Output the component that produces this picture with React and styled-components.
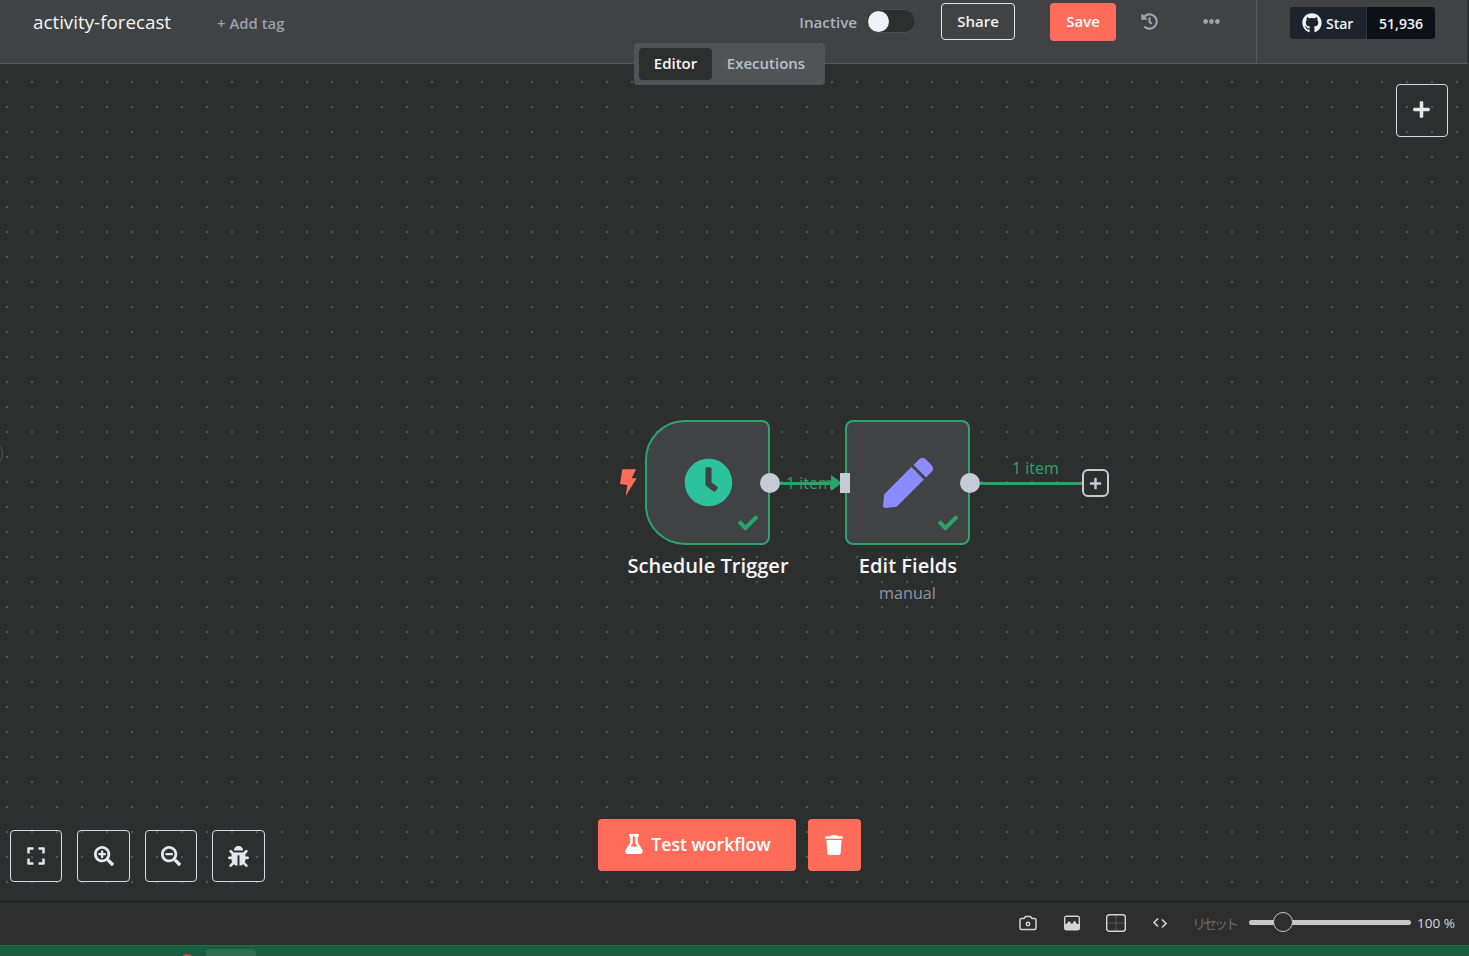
import styled, { createGlobalStyle } from "styled-components";
import {
  FaBug,
  FaCheck,
  FaClock,
  FaEllipsisH,
  FaExpand,
  FaFlask,
  FaGithub,
  FaHistory,
  FaPen,
  FaPlus,
  FaSearchMinus,
  FaSearchPlus,
  FaTrash,
} from "react-icons/fa";

const GlobalStyle = createGlobalStyle`
  html, body {
    margin: 0;
    height: 100%;
    overflow: hidden;
    background: #2d2e2e;
    font-family: "Open Sans", "Liberation Sans", sans-serif;
  }
  * { box-sizing: border-box; }
`;

const App = () => {
  return (
    <Page>
      <GlobalStyle />
      <Header>
        <Title>activity-forecast</Title>
        <AddTag>+ Add tag</AddTag>
        <Actions>
          <StatusLabel>Inactive</StatusLabel>
          <Toggle>
            <Knob />
          </Toggle>
          <ShareButton>Share</ShareButton>
          <SaveButton>Save</SaveButton>
          <HeaderIcon $left={25}>
            <FaHistory size={17} />
          </HeaderIcon>
          <HeaderIcon $left={45}>
            <FaEllipsisH size={17} />
          </HeaderIcon>
        </Actions>
        <GithubArea>
          <GithubBadge>
            <StarPart>
              <FaGithub size={20} />
              Star
            </StarPart>
            <CountPart>51,936</CountPart>
          </GithubBadge>
        </GithubArea>
        <Tabs>
          <Tab $active>Editor</Tab>
          <Tab>Executions</Tab>
        </Tabs>
      </Header>

      <Canvas>
        <EdgeMark />
        <AddNodeButton>
          <FaPlus size={19} />
        </AddNodeButton>

        <TriggerBolt>
          <svg width="19" height="29" viewBox="0 0 19 29" fill="currentColor">
            <path d="M3.3 1.3H17l-4.3 9h5L6.7 28l1.6-11L1 16z" />
          </svg>
        </TriggerBolt>

        <NodeBox $x={645} $trigger>
          <ClockIcon>
            <FaClock size={49} />
          </ClockIcon>
          <NodeCheck>
            <FaCheck size={20} />
          </NodeCheck>
          <OutputDot />
        </NodeBox>
        <NodeTitle $x={708}>Schedule Trigger</NodeTitle>

        <Wire $x={780} $width={56} />
        <ArrowHead />
        <WireLabel $x={786} $y={472}>
          1 item
        </WireLabel>
        <InputPort />

        <NodeBox $x={845}>
          <PenIcon>
            <FaPen size={50} />
          </PenIcon>
          <NodeCheck>
            <FaCheck size={20} />
          </NodeCheck>
          <OutputDot />
        </NodeBox>
        <NodeTitle $x={908}>Edit Fields</NodeTitle>
        <NodeSubtitle>manual</NodeSubtitle>

        <Wire $x={980} $width={102} />
        <WireLabel $x={1012} $y={457}>
          1 item
        </WireLabel>
        <PlusEndpoint>
          <FaPlus size={13} />
        </PlusEndpoint>

        <ZoomTools>
          <ToolButton $width={52}>
            <FaExpand size={20} />
          </ToolButton>
          <ToolButton $width={53}>
            <FaSearchPlus size={20} />
          </ToolButton>
          <ToolButton $width={52}>
            <FaSearchMinus size={20} />
          </ToolButton>
          <ToolButton $width={53}>
            <FaBug size={21} />
          </ToolButton>
        </ZoomTools>

        <RunTools>
          <RunButton>
            <FaFlask size={20} />
            Test workflow
          </RunButton>
          <TrashButton>
            <FaTrash size={20} />
          </TrashButton>
        </RunTools>
      </Canvas>

      <BottomBar>
        <BarIcon>
          <svg width="20" height="20" viewBox="0 0 20 20" fill="none" stroke="currentColor" strokeWidth="1.5">
            <path d="M3.5 5.5h2.5l1.5-2h5l1.5 2h2.5a1.5 1.5 0 0 1 1.5 1.5v8a1.5 1.5 0 0 1-1.5 1.5h-13a1.5 1.5 0 0 1-1.5-1.5v-8a1.5 1.5 0 0 1 1.5-1.5z" />
            <circle cx="10" cy="11" r="1.7" />
          </svg>
        </BarIcon>
        <BarIcon>
          <svg width="20" height="20" viewBox="0 0 20 20">
            <rect x="2" y="2.5" width="16" height="15" rx="2.5" fill="currentColor" />
            <rect x="3.4" y="4" width="13.2" height="7" fill="#2e2e2e" />
            <path d="M3.4 12l3.6-4 3 3 2.5-3.4 3.6 5v3h-12.7z" fill="currentColor" />
          </svg>
        </BarIcon>
        <BarIcon>
          <svg width="22" height="20" viewBox="0 0 22 20" fill="none">
            <path d="M11 2v16M2 10h18" stroke="#555" strokeWidth="1" />
            <rect x="1.7" y="1.7" width="18.6" height="16.6" rx="2.5" stroke="currentColor" strokeWidth="1.4" />
          </svg>
        </BarIcon>
        <BarIcon>
          <svg width="16" height="14" viewBox="0 0 16 14" fill="none" stroke="currentColor" strokeWidth="1.6">
            <path d="M6 2.5L2 6.5l4 4M10 3.5l4 4-4 4" />
          </svg>
        </BarIcon>
        <ResetLabel>リセット</ResetLabel>
        <Slider>
          <SliderThumb />
        </Slider>
        <ZoomValue>100 %</ZoomValue>
      </BottomBar>

      <TaskStrip>
        <RedDot />
        <TaskTab />
      </TaskStrip>
    </Page>
  );
};

export default App;

const Page = styled.div`
  position: relative;
  display: flex;
  flex-direction: column;
  height: 956px;
  overflow: hidden;
`;

const Header = styled.header`
  position: relative;
  z-index: 2;
  display: flex;
  align-items: flex-start;
  height: 64px;
  flex-shrink: 0;
  padding-left: 33px;
  background: #414244;
  border-bottom: 1px solid #57585a;
  border-right: 2px solid #2f3031;
`;

const Title = styled.div`
  margin-top: 10px;
  width: 184px;
  font-size: 18.8px;
  line-height: 24px;
  color: #f5f6f8;
`;

const AddTag = styled.div`
  margin-top: 14px;
  font-size: 14.9px;
  font-weight: 600;
  line-height: 19px;
  color: #99a0ab;
`;

const Actions = styled.div`
  display: flex;
  align-items: flex-start;
  margin-left: auto;
  padding-top: 3px;
`;

const StatusLabel = styled.div`
  margin-top: 10px;
  margin-right: 9px;
  font-size: 15.2px;
  font-weight: 600;
  line-height: 19px;
  color: #a9b1bd;
`;

const Toggle = styled.div`
  display: flex;
  align-items: center;
  width: 50px;
  height: 24px;
  margin-top: 6px;
  margin-right: 25px;
  padding-left: 1px;
  border-radius: 12px;
  border: 1px solid #4c4d4f;
  background: #2d2e2e;
`;

const Knob = styled.div`
  width: 21px;
  height: 21px;
  border-radius: 50%;
  background: #f0f1f8;
`;

const ShareButton = styled.button`
  width: 74px;
  height: 37px;
  padding: 0 0 1px;
  margin-right: 35px;
  border: 1px solid #e2e4ea;
  border-radius: 4px;
  background: transparent;
  color: #f0f1f5;
  font-family: inherit;
  font-size: 15px;
  font-weight: 600;
`;

const SaveButton = styled.button`
  width: 66px;
  height: 38px;
  padding: 0 0 3px;
  border: none;
  border-radius: 4px;
  background: #ff6d5a;
  color: #fff;
  font-family: inherit;
  font-size: 15px;
  font-weight: 600;
`;

const HeaderIcon = styled.div`
  display: flex;
  align-items: center;
  justify-content: center;
  width: 17px;
  height: 37px;
  margin-left: ${({ $left }) => $left}px;
  color: #9ea3ab;
`;

const GithubArea = styled.div`
  display: flex;
  align-items: flex-start;
  width: 211px;
  height: 63px;
  margin-left: 36px;
  padding: 7px 0 0 33px;
  border-left: 1px solid #57585a;
`;

const GithubBadge = styled.div`
  display: flex;
  height: 32px;
  border-radius: 3px;
  overflow: hidden;
  font-size: 14px;
  font-weight: 600;
  color: #f0f3f6;
`;

const StarPart = styled.div`
  display: flex;
  align-items: center;
  gap: 4px;
  width: 77px;
  padding-left: 12px;
  background: #1d232b;
  border-right: 1px solid #30363d;
`;

const CountPart = styled.div`
  display: flex;
  align-items: center;
  justify-content: center;
  width: 68px;
  background: #0d1117;
`;

const Tabs = styled.div`
  position: absolute;
  top: 43px;
  left: 634px;
  display: flex;
  gap: 0;
  width: 191px;
  height: 42px;
  padding: 5px;
  border-radius: 4px;
  background: #525355;
`;

const Tab = styled.div`
  display: flex;
  align-items: center;
  justify-content: center;
  width: ${({ $active }) => ($active ? "73px" : "108px")};
  padding-bottom: 2px;
  border-radius: 4px;
  background: ${({ $active }) => ($active ? "#2d2e2e" : "transparent")};
  color: ${({ $active }) => ($active ? "#f5f6f8" : "#b9c0cc")};
  font-size: 15px;
  font-weight: 600;
`;

const Canvas = styled.main`
  position: relative;
  flex: 1;
  background-color: #2d2e2e;
  background-image: radial-gradient(circle at 1px 1px, #545556 1px, transparent 1.2px);
  background-size: 25px 25px;
  background-position: 6px -8px;
`;

const EdgeMark = styled.div`
  position: absolute;
  left: -9px;
  top: 381px;
  width: 12px;
  height: 18px;
  border-radius: 50%;
  border: 1px solid #55565a;
`;

const OutlineButton = styled.button`
  display: flex;
  align-items: center;
  justify-content: center;
  padding: 0;
  border: 1px solid #d6d8de;
  border-radius: 4px;
  background: transparent;
  color: #e6e8ee;
`;

const AddNodeButton = styled(OutlineButton)`
  position: absolute;
  top: 20px;
  left: 1396px;
  width: 52px;
  height: 53px;
  padding: 0 1px 2px 0;
`;

const TriggerBolt = styled.div`
  position: absolute;
  left: 619px;
  top: 404px;
  display: flex;
  color: #ff6d5a;
`;

const NodeBox = styled.div`
  position: absolute;
  left: ${({ $x }) => $x}px;
  top: 356px;
  width: 125px;
  height: 125px;
  display: flex;
  align-items: center;
  justify-content: center;
  background: #414244;
  border: 2px solid #29a568;
  border-radius: ${({ $trigger }) => ($trigger ? "40px 8px 8px 40px" : "8px")};
`;

const ClockIcon = styled.div`
  display: flex;
  margin-left: 1px;
  color: #2dc29d;
`;

const PenIcon = styled.div`
  display: flex;
  color: #8b8bff;
`;

const NodeCheck = styled.div`
  position: absolute;
  right: 10px;
  bottom: 10px;
  display: flex;
  color: #29a568;
`;

const OutputDot = styled.div`
  position: absolute;
  right: -12px;
  top: 50%;
  width: 20px;
  height: 20px;
  margin-top: -10px;
  border-radius: 50%;
  background: #c6cad6;
`;

const NodeTitle = styled.div`
  position: absolute;
  left: ${({ $x }) => $x}px;
  top: 488px;
  transform: translateX(-50%);
  white-space: nowrap;
  font-size: 20.1px;
  font-weight: 600;
  line-height: 27px;
  color: #f5f6f8;
`;

const NodeSubtitle = styled.div`
  position: absolute;
  left: 907.5px;
  top: 518px;
  transform: translateX(-50%);
  font-size: 16.2px;
  line-height: 22px;
  color: #8d96a6;
`;

const Wire = styled.div`
  position: absolute;
  left: ${({ $x }) => $x}px;
  top: 418px;
  width: ${({ $width }) => $width}px;
  height: 3px;
  background: #29a568;
`;

const ArrowHead = styled.div`
  position: absolute;
  left: 831px;
  top: 411px;
  width: 0;
  height: 0;
  border-style: solid;
  border-width: 8px 0 8px 11px;
  border-color: transparent transparent transparent #29a568;
`;

const WireLabel = styled.div`
  position: absolute;
  left: ${({ $x }) => $x}px;
  top: ${({ $y }) => $y - 64}px;
  font-size: 16px;
  line-height: 22px;
  color: #29a568;
`;

const InputPort = styled.div`
  position: absolute;
  z-index: 1;
  left: 840px;
  top: 409px;
  width: 10px;
  height: 20px;
  background: #c6cad6;
`;

const PlusEndpoint = styled.div`
  position: absolute;
  left: 1082px;
  top: 405px;
  display: flex;
  align-items: center;
  justify-content: center;
  width: 27px;
  height: 28px;
  border: 2px solid #c6cad6;
  border-radius: 6px;
  background: #2d2e2e;
  color: #c6cad6;
`;

const ZoomTools = styled.div`
  position: absolute;
  left: 10px;
  top: 766px;
  display: flex;
  gap: 15px;
`;

const ToolButton = styled(OutlineButton)`
  width: ${({ $width }) => $width}px;
  height: 52px;
`;

const RunTools = styled.div`
  position: absolute;
  left: 598px;
  top: 755px;
  display: flex;
  gap: 12px;
`;

const RunButton = styled.button`
  display: flex;
  align-items: center;
  justify-content: center;
  gap: 7px;
  width: 198px;
  height: 52px;
  padding: 0 0 3px 1px;
  border: none;
  border-radius: 4px;
  background: #ff6d5a;
  color: #fff;
  font-family: inherit;
  font-size: 17.6px;
  font-weight: 600;
`;

const TrashButton = styled.button`
  display: flex;
  align-items: center;
  justify-content: center;
  width: 53px;
  height: 52px;
  padding: 0 1px 0 0;
  border: none;
  border-radius: 4px;
  background: #ff6d5a;
  color: #fff;
`;

const BottomBar = styled.footer`
  display: flex;
  align-items: center;
  justify-content: flex-end;
  flex-shrink: 0;
  height: 44px;
  padding: 0 14px 2px 0;
  background: #2e2e2e;
  border-top: 1px solid #1c1c1c;
  color: #d4d4d4;
`;

const BarIcon = styled.div`
  display: flex;
  align-items: center;
  justify-content: center;
  width: 22px;
  height: 22px;
  margin-right: 22px;
`;

const ResetLabel = styled.div`
  margin-left: -1px;
  margin-right: 13px;
  font-family: "Noto Sans CJK JP", sans-serif;
  font-size: 14px;
  letter-spacing: -3px;
  color: #6a6a6a;
`;

const Slider = styled.div`
  position: relative;
  width: 162px;
  height: 5px;
  border-radius: 3px;
  background: #c8c8c8;
`;

const SliderThumb = styled.div`
  position: absolute;
  left: 24px;
  top: -8px;
  width: 20px;
  height: 20px;
  border-radius: 50%;
  border: 1px solid #c8c8c8;
  background: #2e2e2e;
`;

const ZoomValue = styled.div`
  width: 38px;
  margin-left: 6px;
  white-space: nowrap;
  font-size: 13.5px;
  color: #d8dce2;
`;

const TaskStrip = styled.div`
  position: relative;
  flex: 0 0 11px;
  overflow: hidden;
  background: #155e3f;
  border-top: 1px solid #2a6b50;
`;

const RedDot = styled.div`
  position: absolute;
  left: 181px;
  top: 8px;
  width: 12px;
  height: 12px;
  border-radius: 50%;
  background: #d9434a;
`;

const TaskTab = styled.div`
  position: absolute;
  left: 206px;
  top: 3px;
  width: 50px;
  height: 20px;
  border-radius: 4px;
  background: #2a6f52;
`;
